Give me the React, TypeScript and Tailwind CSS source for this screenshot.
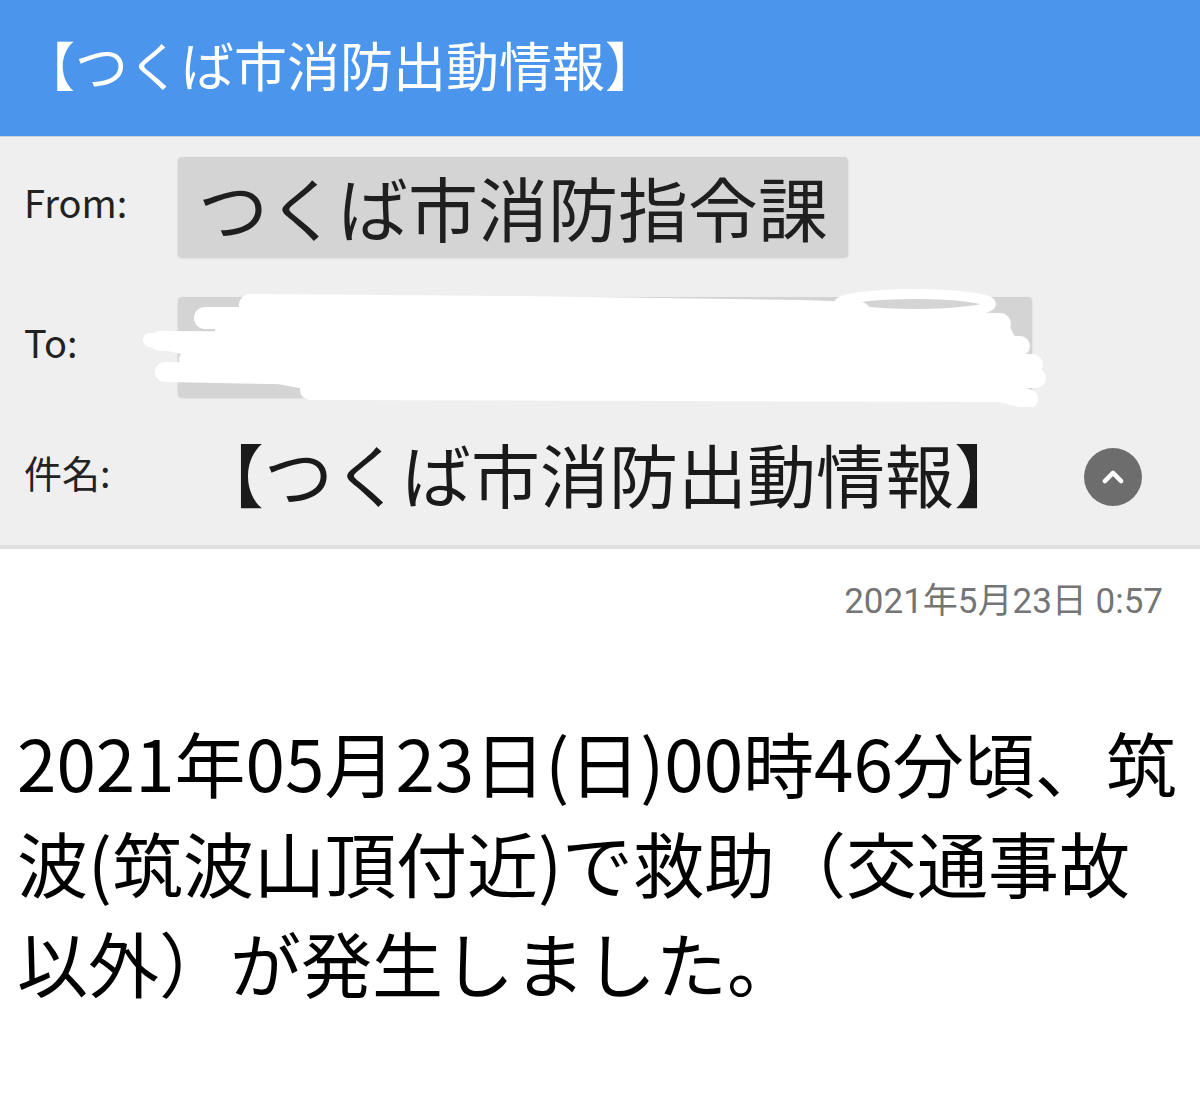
import React from "react";

const jp = { fontFamily: '"Noto Sans CJK JP", "Noto Sans", sans-serif' };

function Scribble() {
  return (
    <svg
      className="absolute left-[140px] top-[285px] pointer-events-none"
      width="910"
      height="122"
      viewBox="140 285 910 122"
    >
      <g stroke="#ffffff" strokeLinecap="round" strokeLinejoin="round" fill="none">
        <path d="M250 305 L520 307 L800 311 L860 313" strokeWidth="22" />
        <path d="M205 318 L600 318 L1000 324" strokeWidth="22" />
        <path d="M160 341 L600 343 L1020 346" strokeWidth="20" />
        <path d="M190 360 L1032 365" strokeWidth="22" />
        <path d="M165 372 L600 380 L1036 378" strokeWidth="20" />
        <path d="M310 390 L1000 392 L1028 399" strokeWidth="20" />
        <path d="M150 340 L205 352" strokeWidth="14" />
        <ellipse cx="915" cy="304" rx="76" ry="10" strokeWidth="10" />
      </g>
      <path d="M215 312 L1005 318 L1022 350 L1025 372 L1000 392 L320 392 L215 372 Z" fill="#ffffff" />
    </svg>
  );
}

export default function App() {
  return (
    <div className="w-[1200px] min-h-[1117px] bg-white relative" style={jp}>
      <div className="h-[137px] bg-[#4b95ec] border-b border-[#c9d3df] flex items-center pl-[22px] pb-[8px]">
        <span className="text-white text-[53px] leading-none whitespace-nowrap">【つくば市消防出動情報】</span>
      </div>

      <div className="bg-[#efefef] border-b-4 border-[#e0e0e0] pt-[20px] pb-[18px]">
        <div className="flex items-center h-[100px]">
          <div className="w-[178px] pl-[24px] pb-[10px] text-[38px] text-[#222222] leading-none">From:</div>
          <div className="h-[100px] bg-[#d4d4d4] rounded-[4px] shadow-[0_1px_2px_rgba(0,0,0,0.15)] px-[20px] flex items-center">
            <span className="text-[70px] leading-none text-[#1f1f1f] whitespace-nowrap">つくば市消防指令課</span>
          </div>
        </div>
        <div className="flex items-center h-[100px] mt-[40px]">
          <div className="w-[178px] pl-[24px] pb-[10px] text-[38px] text-[#222222] leading-none">To:</div>
          <div className="h-[100px] w-[854px] bg-[#d4d4d4] rounded-[4px] shadow-[0_1px_2px_rgba(0,0,0,0.15)]"></div>
        </div>
        <div className="flex items-center h-[100px] mt-[30px]">
          <div className="w-[178px] pl-[24px] pb-[10px] text-[38px] text-[#222222] leading-none whitespace-nowrap">件名:</div>
          <div className="ml-[17px] pb-[8px] text-[69px] leading-none text-[#1a1a1a] whitespace-nowrap">【つくば市消防出動情報】</div>
          <div className="ml-auto mr-[58px] w-[58px] h-[58px] rounded-full bg-[#6d6d6d] flex items-center justify-center">
            <svg width="28" height="28" viewBox="0 0 24 24" fill="none">
              <path d="M5 15.5 L12 8.5 L19 15.5" stroke="#ffffff" strokeWidth="3.8" strokeLinecap="round" strokeLinejoin="round" />
            </svg>
          </div>
        </div>
      </div>

      <div className="flex justify-end pr-[37px] mt-[32px]">
        <span
          className="text-[35px] leading-[42px] text-[#757575] whitespace-nowrap"
          style={{ fontFamily: 'Roboto, "Noto Sans CJK JP", sans-serif' }}
        >
          2021年5月23日 0:57
        </span>
      </div>

      <div className="pl-[17px] mt-[88px] text-[71px] leading-[100px] text-black">
        <div className="whitespace-nowrap">2021年05月23日(日)00時46分頃、筑</div>
        <div className="whitespace-nowrap">波(筑波山頂付近)で救助（交通事故</div>
        <div className="whitespace-nowrap">以外）が発生しました。</div>
      </div>

      <Scribble />
    </div>
  );
}
